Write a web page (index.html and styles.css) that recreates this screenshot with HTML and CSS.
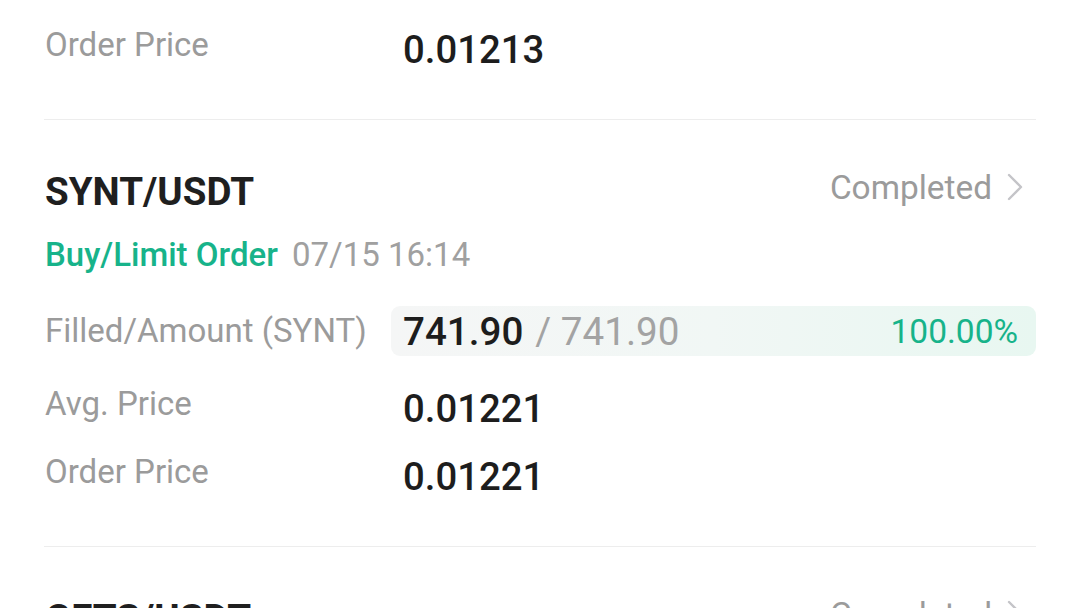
FILE: index.html
```html
<!DOCTYPE html>
<html lang="en">
<head>
  <meta charset="UTF-8">
  <title>Order History</title>
  <link rel="stylesheet" href="styles.css">
</head>
<body>

<div class="orders">

  <!-- end of the previous order -->
  <div class="order partial">
    <div class="row">
      <span class="label">Order Price</span>
      <span class="value">0.01213</span>
    </div>
  </div>

  <div class="order">
    <div class="order-head">
      <span class="pair">SYNT/USDT</span>
      <span class="status">
        Completed
        <svg class="chevron" width="16" height="28" viewBox="0 0 16 28">
          <path d="M2 2 L14 14 L2 26" fill="none" stroke="#c4c4c8" stroke-width="2.4" stroke-linecap="round" stroke-linejoin="round"/>
        </svg>
      </span>
    </div>
    <div class="order-type">
      <span class="side">Buy/Limit Order</span>
      <span class="time">07/15 16:14</span>
    </div>

    <div class="row filled">
      <span class="label">Filled/Amount (SYNT)</span>
      <div class="progress">
        <span class="amounts"><b>741.90</b><i>/ 741.90</i></span>
        <span class="percent">100.00%</span>
      </div>
    </div>
    <div class="row">
      <span class="label">Avg. Price</span>
      <span class="value">0.01221</span>
    </div>
    <div class="row">
      <span class="label">Order Price</span>
      <span class="value">0.01221</span>
    </div>
  </div>

  <div class="order">
    <div class="order-head">
      <span class="pair">GFTS/USDT</span>
      <span class="status">
        Completed
        <svg class="chevron" width="16" height="28" viewBox="0 0 16 28">
          <path d="M2 2 L14 14 L2 26" fill="none" stroke="#c4c4c8" stroke-width="2.4" stroke-linecap="round" stroke-linejoin="round"/>
        </svg>
      </span>
    </div>
  </div>

</div>

</body>
</html>
```

FILE: styles.css
```css
body {
  margin: 0;
  background: #ffffff;
  font-family: 'Roboto', 'Noto Sans', sans-serif;
  color: #1d1d1d;
  overflow: hidden;
}

.orders {
  padding: 0 44px;
}

.order {
  padding: 48px 0 42px;
  border-bottom: 1px solid #ededed;
}

.order.partial {
  padding-top: 23px;
}

.order.partial .row {
  margin-top: 0;
}

.order-head {
  display: flex;
  justify-content: space-between;
  align-items: center;
  height: 46px;
}

.pair {
  font-size: 38.5px;
  font-weight: 700;
  color: #1f1f1f;
  padding-left: 1px;
}

.status {
  display: flex;
  align-items: center;
  gap: 15px;
  font-size: 33.4px;
  color: #9b9b9b;
  margin-top: -8px;
  margin-right: 13px;
}

.order-type {
  margin-top: 19px;
  line-height: 44px;
  font-size: 33px;
  padding-left: 1px;
}

.side {
  color: #17b38a;
  font-weight: 500;
}

.time {
  color: #a0a0a0;
  margin-left: 6px;
}

.row {
  display: grid;
  grid-template-columns: 347px 1fr;
  align-items: start;
  margin-top: 14px;
}

.label {
  font-size: 33px;
  line-height: 44px;
  color: #9b9b9b;
  padding-left: 1px;
}

.value {
  font-size: 38.3px;
  line-height: 54px;
  font-weight: 500;
  padding-left: 12px;
}

.row.filled {
  margin-top: 29px;
  align-items: center;
}

.row.filled + .row {
  margin-top: 26px;
}

.row.filled .label {
  line-height: 50px;
}

.progress {
  display: flex;
  justify-content: space-between;
  align-items: center;
  height: 50px;
  padding: 0 18px 0 12px;
  border-radius: 9px;
  background: linear-gradient(90deg, #f5f6f6 0%, #f1f7f5 50%, #e8f7f1 100%);
}

.amounts b {
  font-size: 38.6px;
  font-weight: 500;
  color: #1d1d1d;
}

.amounts i {
  font-style: normal;
  font-size: 38.6px;
  color: #a3a3a3;
  margin-left: 12px;
}

.percent {
  font-size: 33.5px;
  color: #17b38a;
}
```
